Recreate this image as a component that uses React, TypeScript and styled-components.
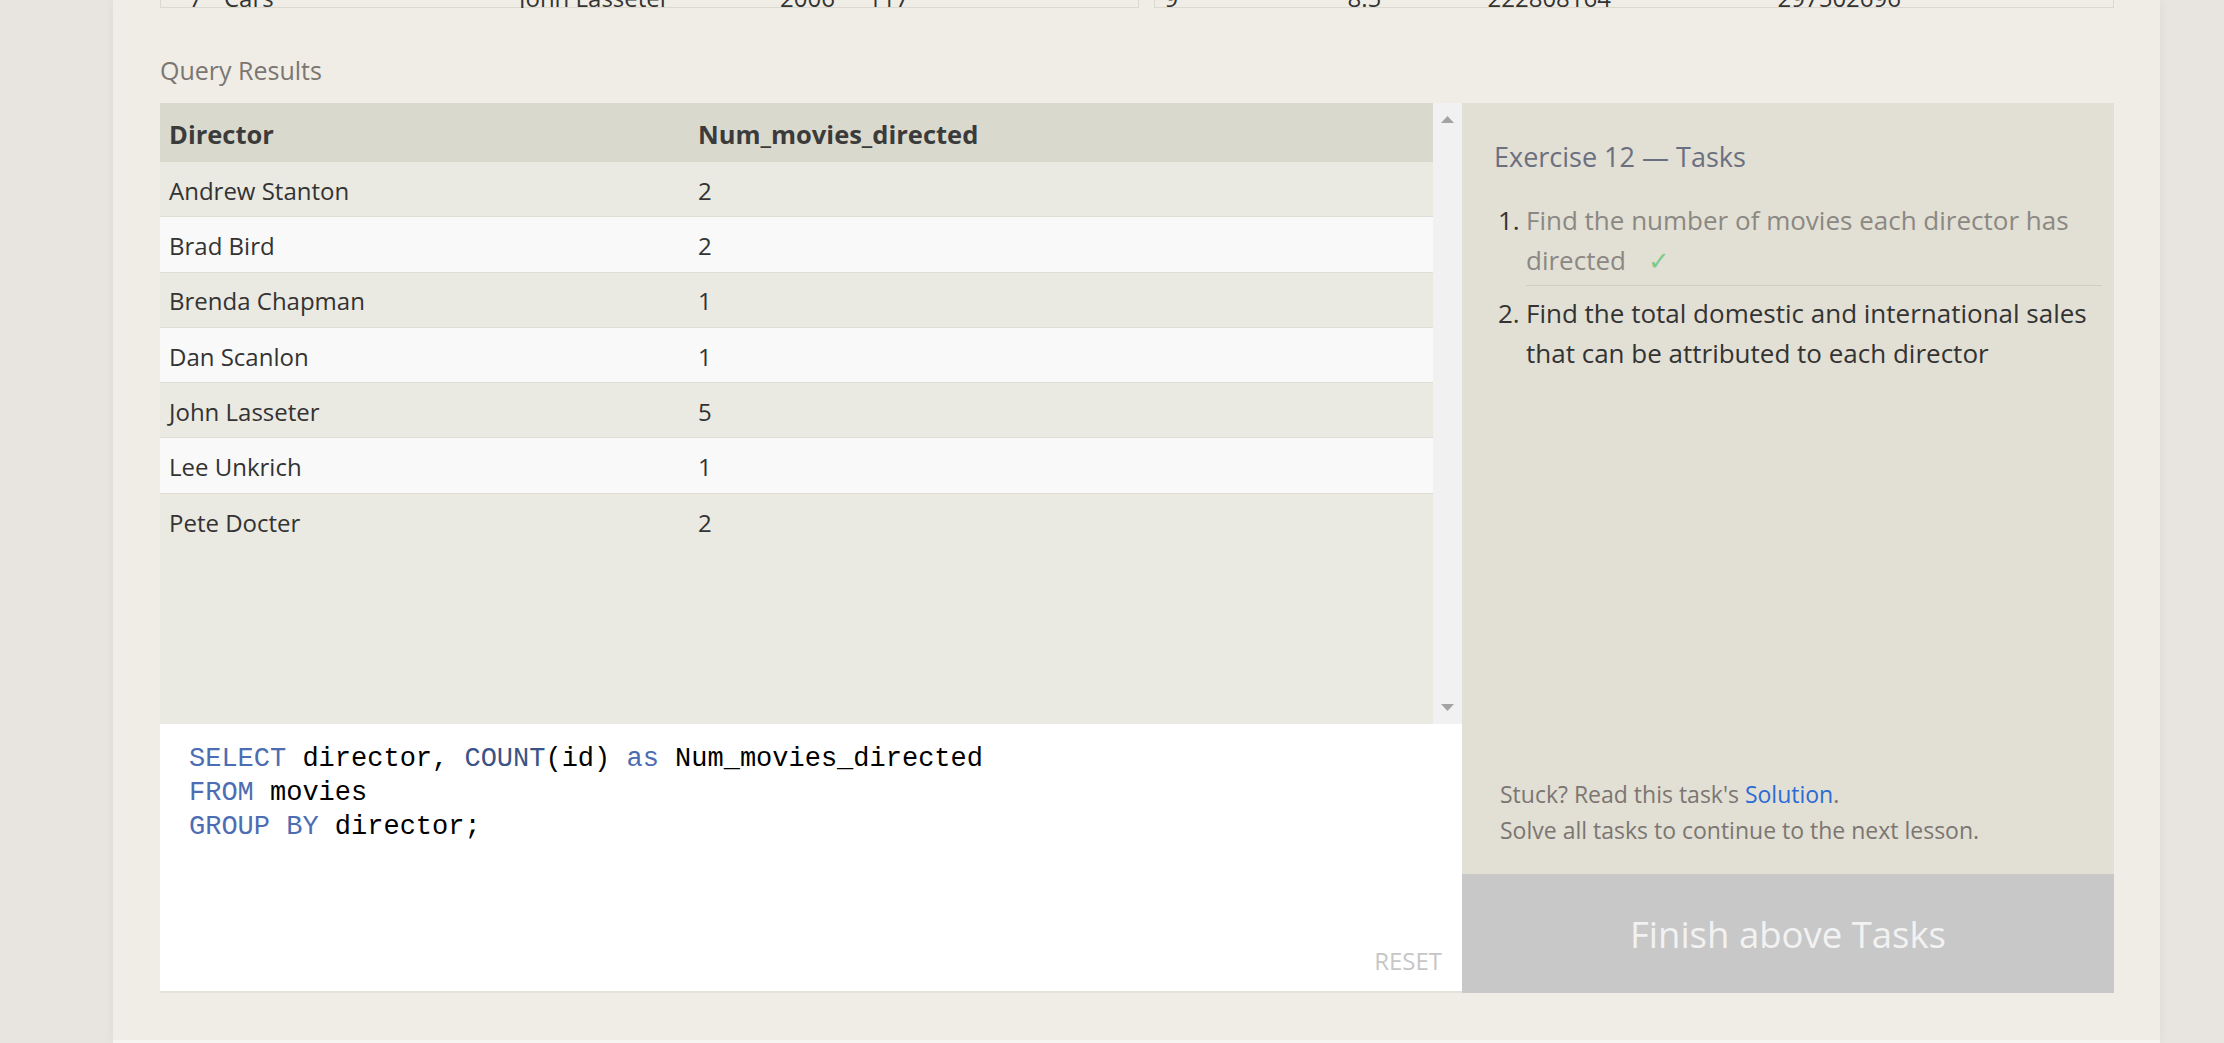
import * as React from 'react'
import styled, { createGlobalStyle } from 'styled-components'

const GlobalStyle = createGlobalStyle`
  html, body {
    margin: 0;
    padding: 0;
  }

  body {
    background: #e8e4e0;
    font-family: 'Open Sans', 'Noto Sans', sans-serif;
    color: #333;
  }

  * {
    box-sizing: border-box;
  }
`

const Card = styled('main')`
  margin-left: 113px;
  width: 2047px;
  height: 1043px;
  padding: 0 46px 0 47px;
  background: #f0ede6;
  border-bottom: 3px solid #f7f5f1;
  box-shadow: 0 0 10px rgba(0, 0, 0, 0.05);
  overflow: hidden;
`

/* the bottom edge of the data table above, scrolled mostly out of view */
const TopStrip = styled('div')`
  display: flex;
  align-items: flex-end;
  gap: 15px;
  height: 8px;
  overflow: hidden;
`

const PrevBox = styled('div')<{ $cols: string; $pad: number }>`
  flex: 1;
  display: grid;
  grid-template-columns: ${(p) => p.$cols};
  padding-left: ${(p) => p.$pad}px;
  border: 1px solid #dcd9d1;
  border-top: none;
  font-size: 24px;
  line-height: 18px;
  color: #333;
  white-space: nowrap;
`

const QueryLabel = styled('h2')`
  margin: 46px 0 17px;
  font-size: 25px;
  line-height: 32px;
  font-weight: 400;
  color: #7b7671;
`

const Workspace = styled('section')`
  display: grid;
  grid-template-columns: 1302px 1fr;
  height: 890px;
`

const LeftColumn = styled('div')`
  display: flex;
  flex-direction: column;
`

const Results = styled('div')`
  display: flex;
  flex: none;
  height: 621px;
`

const TableArea = styled('div')`
  flex: 1;
  background: #eae9e2;
`

const HeaderRow = styled('div')`
  display: grid;
  grid-template-columns: 529px 1fr;
  align-items: center;
  height: 59px;
  background: #dad9cd;
  font-weight: 700;
  color: #3b3b3b;

  & > div {
    font-size: 25.5px;
  }
`

const DataRow = styled('div')<{ $light: boolean }>`
  display: grid;
  grid-template-columns: 529px 1fr;
  align-items: center;
  height: 55.3px;
  background: ${(p) => (p.$light ? '#f9f9f9' : '#eae9e2')};
  border-bottom: 1px solid #dfddd5;

  &:last-child {
    border-bottom: none;
  }
`

const Cell = styled('div')`
  padding: 3px 0 0 9px;
  font-size: 24px;
  line-height: 32px;
`

const Scrollbar = styled('div')`
  display: flex;
  flex-direction: column;
  justify-content: space-between;
  align-items: center;
  width: 29px;
  padding: 13px 0;
  background: #f1f1f1;

  svg {
    display: block;
  }
`

const Editor = styled('div')`
  flex: 1;
  display: flex;
  flex-direction: column;
  padding: 18px 20px 14px 29px;
  background: #fff;
  border-bottom: 2px solid #e4e2db;
`

const Code = styled('pre')`
  flex: 1;
  margin: 0;
  font-family: 'Liberation Mono', 'DejaVu Sans Mono', monospace;
  font-size: 27px;
  line-height: 34px;
  color: #000;
`

const Keyword = styled('span')<{ $fn?: boolean }>`
  color: ${(p) => (p.$fn ? '#3b5486' : '#4d6db3')};
`

const ResetRow = styled('div')`
  display: flex;
  justify-content: flex-end;
`

const ResetButton = styled('button')`
  padding: 0;
  border: none;
  background: none;
  font-family: inherit;
  font-size: 24px;
  line-height: 32px;
  color: #c6c6c6;
`

const RightPanel = styled('aside')`
  display: flex;
  flex-direction: column;
  background: #e2dfd4;
`

const TaskArea = styled('div')`
  flex: 1;
  display: flex;
  flex-direction: column;
  padding: 36px 12px 0 32px;
`

const Title = styled('h3')`
  margin: 0;
  font-size: 27px;
  line-height: 36px;
  font-weight: 400;
  color: #6b7081;
`

const TaskList = styled('ol')`
  list-style: none;
  margin: 25px 0 0;
  padding: 0 0 0 4px;
`

const TaskItem = styled('li')`
  display: grid;
  grid-template-columns: 28px 1fr;
  font-size: 26px;
  line-height: 40px;
  color: #333;

  & + & {
    margin-top: 7px;
  }
`

const TaskText = styled('span')<{ $done?: boolean }>`
  color: ${(p) => (p.$done ? '#8b8883' : '#333')};
  padding-bottom: ${(p) => (p.$done ? '5px' : '0')};
  border-bottom: ${(p) => (p.$done ? '1px solid #cfccc2' : 'none')};
`

const Check = styled('span')`
  margin-left: 22px;
  font-weight: 300;
  color: #7ccb8b;
`

const Hint = styled('div')`
  margin-top: auto;
  margin-bottom: 26px;
  padding-left: 6px;
  font-size: 23px;
  line-height: 36px;
  color: #7b7672;

  p {
    margin: 0;
  }

  a {
    color: #2b6bd6;
    text-decoration: none;
  }
`

const FinishButton = styled('button')`
  display: flex;
  align-items: center;
  justify-content: center;
  width: 100%;
  height: 119px;
  border: none;
  background: #c8c8c8;
  font-family: inherit;
  font-size: 36.5px;
  color: #f2f2f2;
`

const results = [
  { director: 'Andrew Stanton', count: 2 },
  { director: 'Brad Bird', count: 2 },
  { director: 'Brenda Chapman', count: 1 },
  { director: 'Dan Scanlon', count: 1 },
  { director: 'John Lasseter', count: 5 },
  { director: 'Lee Unkrich', count: 1 },
  { director: 'Pete Docter', count: 2 },
]

function Arrow({ down }: { down?: boolean }) {
  return (
    <svg width="13" height="7" viewBox="0 0 13 7">
      <path d={down ? 'M0 0 L13 0 L6.5 7 Z' : 'M0 7 L6.5 0 L13 7 Z'} fill="#a3a3a3" />
    </svg>
  )
}

export default function App() {
  return (
    <>
      <GlobalStyle />
      <Card>
        <TopStrip>
          <PrevBox $cols="35px 295px 261px 88px 1fr" $pad={28}>
            <span>7</span>
            <span>Cars</span>
            <span>John Lasseter</span>
            <span>2006</span>
            <span>117</span>
          </PrevBox>
          <PrevBox $cols="183px 140px 290px 1fr" $pad={10}>
            <span>9</span>
            <span>8.5</span>
            <span>222808164</span>
            <span>297502696</span>
          </PrevBox>
        </TopStrip>

        <QueryLabel>Query Results</QueryLabel>

        <Workspace>
          <LeftColumn>
            <Results>
              <TableArea>
                <HeaderRow>
                  <Cell>Director</Cell>
                  <Cell>Num_movies_directed</Cell>
                </HeaderRow>
                {results.map((row, i) => (
                  <DataRow key={row.director} $light={i % 2 === 1}>
                    <Cell>{row.director}</Cell>
                    <Cell>{row.count}</Cell>
                  </DataRow>
                ))}
              </TableArea>
              <Scrollbar>
                <Arrow />
                <Arrow down />
              </Scrollbar>
            </Results>

            <Editor>
              <Code>
                <Keyword>SELECT</Keyword> director, <Keyword $fn>COUNT</Keyword>(id) <Keyword>as</Keyword> Num_movies_directed
                {'\n'}
                <Keyword>FROM</Keyword> movies
                {'\n'}
                <Keyword>GROUP BY</Keyword> director;
              </Code>
              <ResetRow>
                <ResetButton>RESET</ResetButton>
              </ResetRow>
            </Editor>
          </LeftColumn>

          <RightPanel>
            <TaskArea>
              <Title>Exercise 12 — Tasks</Title>
              <TaskList>
                <TaskItem>
                  <span>1.</span>
                  <TaskText $done>
                    Find the number of movies each director has directed
                    <Check>✓</Check>
                  </TaskText>
                </TaskItem>
                <TaskItem>
                  <span>2.</span>
                  <TaskText>Find the total domestic and international sales that can be attributed to each director</TaskText>
                </TaskItem>
              </TaskList>
              <Hint>
                <p>
                  Stuck? Read this task's <a href="#">Solution</a>.
                </p>
                <p>Solve all tasks to continue to the next lesson.</p>
              </Hint>
            </TaskArea>
            <FinishButton>Finish above Tasks</FinishButton>
          </RightPanel>
        </Workspace>
      </Card>
    </>
  )
}
